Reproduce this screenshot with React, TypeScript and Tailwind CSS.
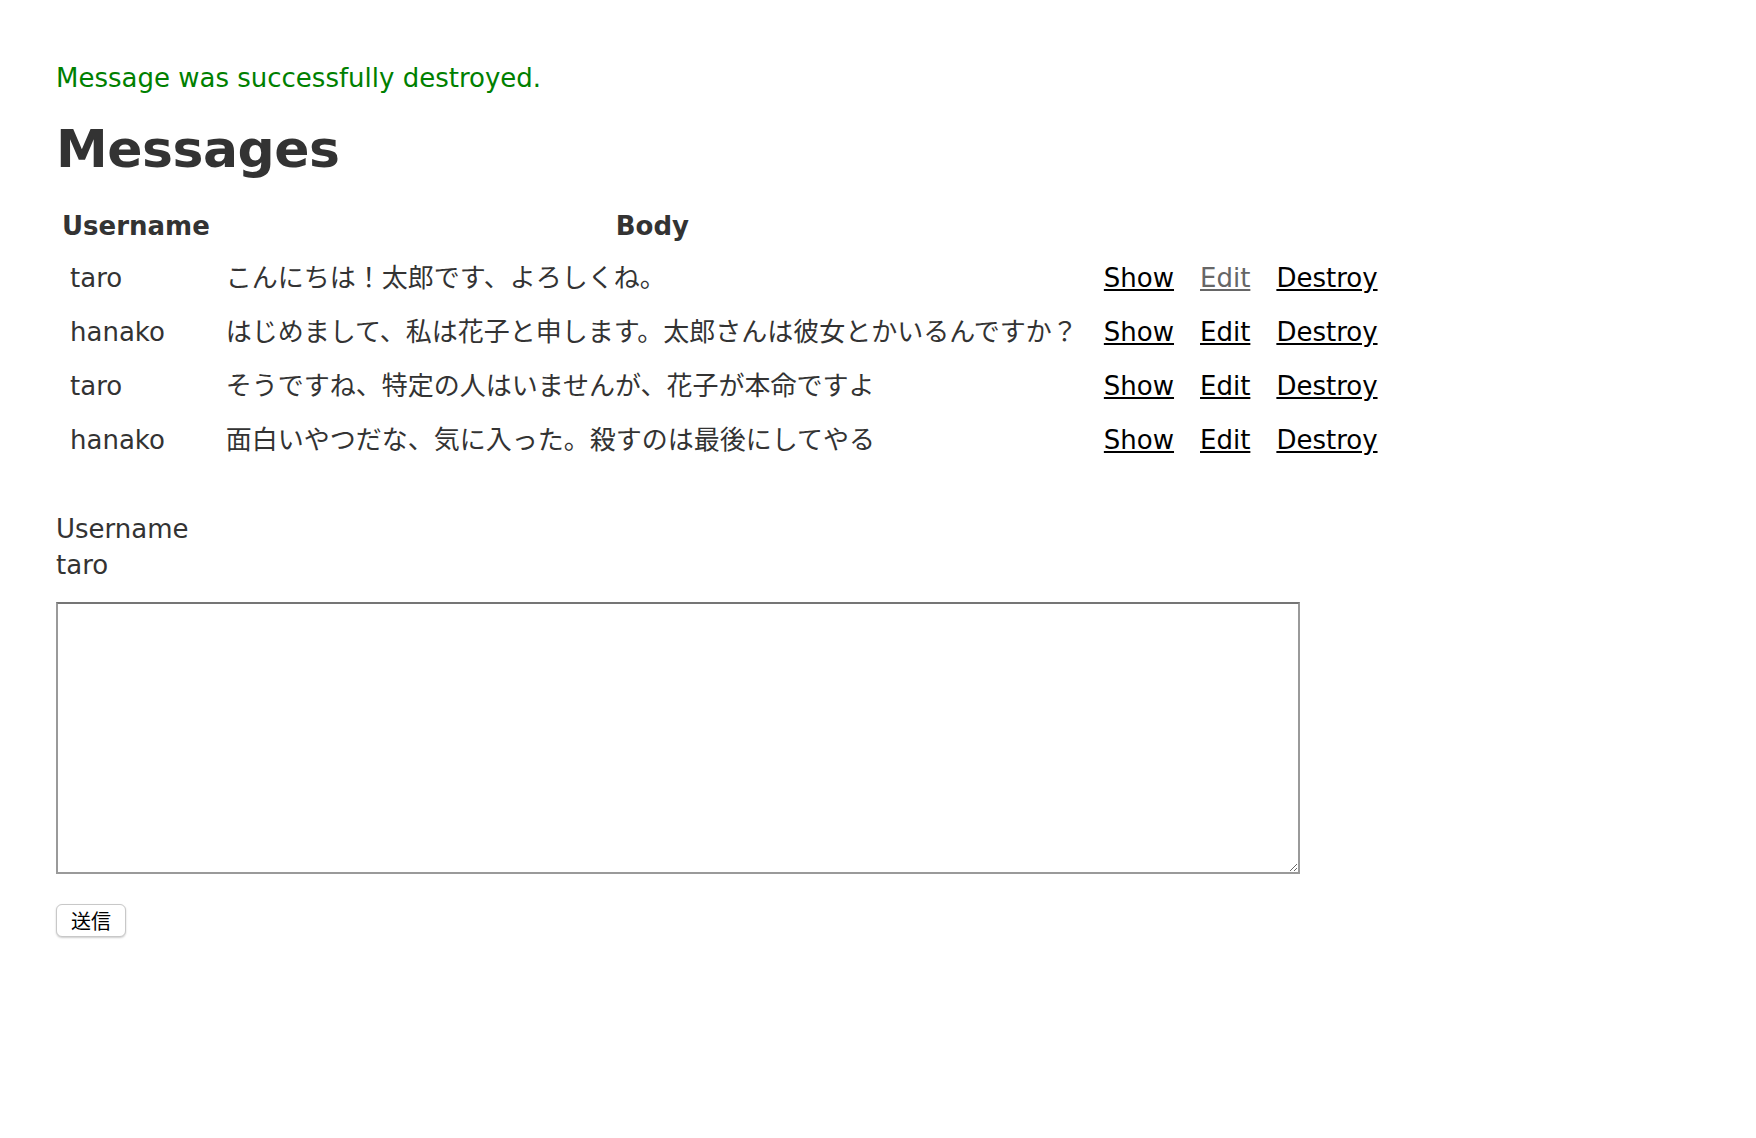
const font = "font-['DejaVu_Sans','Noto_Sans_CJK_JP',Verdana,sans-serif]";

type Message = { username: string; body: string };

const messages: Message[] = [
  { username: 'taro', body: 'こんにちは！太郎です、よろしくね。' },
  { username: 'hanako', body: 'はじめまして、私は花子と申します。太郎さんは彼女とかいるんですか？' },
  { username: 'taro', body: 'そうですね、特定の人はいませんが、花子が本命ですよ' },
  { username: 'hanako', body: '面白いやつだな、気に入った。殺すのは最後にしてやる' },
];

export default function App() {
  return (
    <div className={`min-h-screen bg-white pt-[60px] pl-[56px] text-[#333] ${font} text-[26px] leading-[36px]`}>
      {/* flash */}
      <p className="text-[#008000]">Message was successfully destroyed.</p>

      <h1 className="mt-[35px] mb-[35px] text-[52px] leading-[36px] font-bold tracking-[-0.5px]">Messages</h1>

      <table className="border-separate border-spacing-[4px]">
        <thead>
          <tr>
            <th className="px-[2px] pt-[2px] pb-[12px] font-bold text-center">Username</th>
            <th className="px-[2px] pt-[2px] pb-[12px] font-bold text-center">Body</th>
            <th colSpan={3}></th>
          </tr>
        </thead>
        <tbody>
          {messages.map((m, i) => (
            <tr key={i}>
              <td className="px-[10px] pb-[14px] text-left">{m.username}</td>
              <td className="pl-[10px] pr-[11px] pb-[14px] text-left">{m.body}</td>
              <td className="px-[11px] pb-[14px]">
                <a href="#" className="text-black underline">Show</a>
              </td>
              <td className="px-[11px] pb-[14px]">
                <a href="#" className={i === 0 ? 'text-[#666] underline' : 'text-black underline'}>Edit</a>
              </td>
              <td className="px-[11px] pb-[14px]">
                <a href="#" className="text-black underline">Destroy</a>
              </td>
            </tr>
          ))}
        </tbody>
      </table>

      <form className="mt-[35px]" onSubmit={(e) => e.preventDefault()}>
        <div>Username</div>
        <div>taro</div>
        <textarea
          className="mt-[19px] block w-[1244px] h-[272px] border-2 border-[#9a9a9a] border-t-[#757575] bg-white outline-none"
        />
        <button
          type="submit"
          className="mt-[30px] block w-[70px] h-[33px] rounded-[6px] border border-[#c8c8c8] bg-white text-black shadow-[0_1px_2px_rgba(0,0,0,0.2)] font-['Noto_Sans_CJK_JP',sans-serif] text-[20px] leading-[31px]"
        >
          送信
        </button>
      </form>
    </div>
  );
}
